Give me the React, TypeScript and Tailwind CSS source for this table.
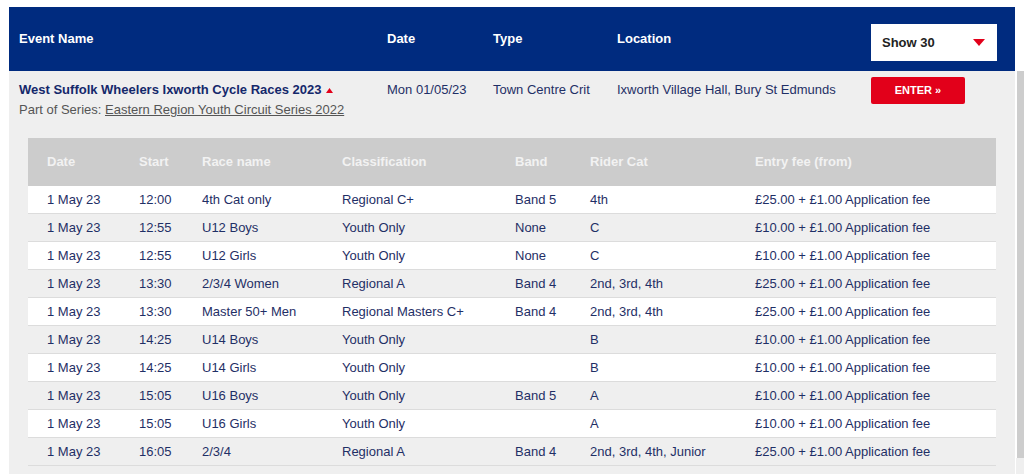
import React from "react";

const rows = [
  ["1 May 23", "12:00", "4th Cat only", "Regional C+", "Band 5", "4th", "£25.00 + £1.00 Application fee"],
  ["1 May 23", "12:55", "U12 Boys", "Youth Only", "None", "C", "£10.00 + £1.00 Application fee"],
  ["1 May 23", "12:55", "U12 Girls", "Youth Only", "None", "C", "£10.00 + £1.00 Application fee"],
  ["1 May 23", "13:30", "2/3/4 Women", "Regional A", "Band 4", "2nd, 3rd, 4th", "£25.00 + £1.00 Application fee"],
  ["1 May 23", "13:30", "Master 50+ Men", "Regional Masters C+", "Band 4", "2nd, 3rd, 4th", "£25.00 + £1.00 Application fee"],
  ["1 May 23", "14:25", "U14 Boys", "Youth Only", "", "B", "£10.00 + £1.00 Application fee"],
  ["1 May 23", "14:25", "U14 Girls", "Youth Only", "", "B", "£10.00 + £1.00 Application fee"],
  ["1 May 23", "15:05", "U16 Boys", "Youth Only", "Band 5", "A", "£10.00 + £1.00 Application fee"],
  ["1 May 23", "15:05", "U16 Girls", "Youth Only", "", "A", "£10.00 + £1.00 Application fee"],
  ["1 May 23", "16:05", "2/3/4", "Regional A", "Band 4", "2nd, 3rd, 4th, Junior", "£25.00 + £1.00 Application fee"],
];

const cols = "grid grid-cols-[92px_63px_140px_173px_75px_165px_1fr] pl-[19px]";

export default function App() {
  return (
    <div className="w-[1024px] h-[474px] overflow-hidden bg-white pt-[7px] pl-[9px] text-[13px] font-['Liberation_Sans',Arial,sans-serif]">
      <div className="flex">
        <div className="w-[1007px]">
          {/* Header */}
          <div className="h-[64px] bg-[#002b7f] grid grid-cols-[368px_106px_124px_254px_1fr] pl-[10px] items-center text-white font-bold">
            <div>Event Name</div>
            <div>Date</div>
            <div>Type</div>
            <div>Location</div>
            <div className="flex">
              <div className="w-[126px] h-[37px] bg-white flex items-center justify-between pl-[11px] pr-[12px] text-[#222] mt-[7px]">
                <span>Show 30</span>
                <svg width="12" height="7" viewBox="0 0 12 7">
                  <polygon points="0,0 12,0 6,7" fill="#e2001a" />
                </svg>
              </div>
            </div>
          </div>
          {/* Panel */}
          <div className="bg-[#efefef] pb-[20px]">
            <div className="grid grid-cols-[368px_106px_124px_254px_1fr] pl-[10px] pt-[6px] text-[#1f2f66]">
              <div className="pt-[5px]">
                <div className="font-bold text-[#14286b] flex items-center leading-[16px]">
                  West Suffolk Wheelers Ixworth Cycle Races 2023
                  <svg className="ml-[4px]" width="7" height="5" viewBox="0 0 7 5">
                    <polygon points="0,5 7,5 3.5,0" fill="#e2001a" />
                  </svg>
                </div>
                <div className="text-[#555] mt-[4px] leading-[16px]">
                  Part of Series: <span className="underline">Eastern Region Youth Circuit Series 2022</span>
                </div>
              </div>
              <div className="pt-[5px] leading-[16px]">Mon 01/05/23</div>
              <div className="pt-[5px] leading-[16px]">Town Centre Crit</div>
              <div className="pt-[5px] leading-[16px]">Ixworth Village Hall, Bury St Edmunds</div>
              <div>
                <div className="w-[94px] h-[27px] bg-[#e2001a] rounded-[2px] flex items-center justify-center text-white font-bold text-[11px]">
                  ENTER »
                </div>
              </div>
            </div>
            <div className="mx-[19px] mt-[20px]">
              <div className={`${cols} h-[48px] items-center bg-[#cccccc] text-[#f2f2f2] font-bold`}>
                <div>Date</div>
                <div>Start</div>
                <div>Race name</div>
                <div>Classification</div>
                <div>Band</div>
                <div>Rider Cat</div>
                <div>Entry fee (from)</div>
              </div>
              {rows.map((r, i) => (
                <div
                  key={i}
                  className={`${cols} h-[28px] items-center border-b border-[#dcdcdc] text-[#1f2f66] ${
                    i % 2 === 0 ? "bg-white" : "bg-[#efefef]"
                  }`}
                >
                  {r.map((c, j) => (
                    <div key={j} className="whitespace-nowrap">{c}</div>
                  ))}
                </div>
              ))}
            </div>
          </div>
        </div>
        <div className="w-[8px] ml-[1px] mt-[64px] flex flex-col">
          <div className="h-[387px] bg-[#cdcdcd] ml-[1px]" />
          <div className="flex-1 bg-[#efefef]" />
        </div>
      </div>
    </div>
  );
}
